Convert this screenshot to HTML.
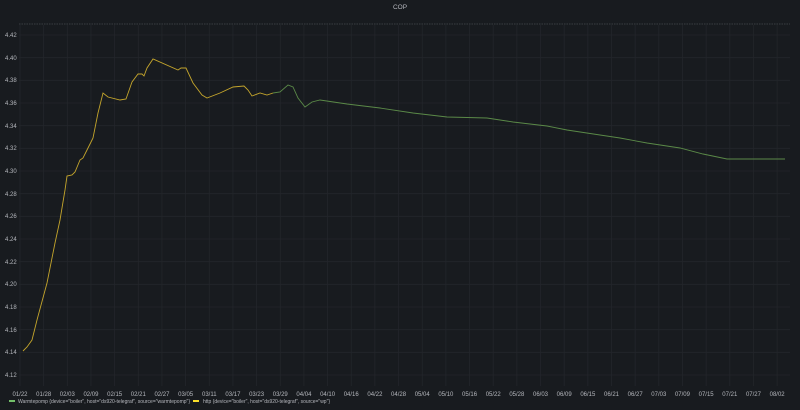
<!DOCTYPE html>
<html><head><meta charset="utf-8"><style>
html,body{margin:0;padding:0;background:#181b1f;}
svg{display:block}
text{font-family:"Liberation Sans",sans-serif;fill:#b5b7bd;}
</style></head><body>
<svg width="800" height="410" viewBox="0 0 800 410" xmlns="http://www.w3.org/2000/svg">
<rect width="800" height="410" fill="#181b1f"/>
<text x="400" y="9" font-size="6.5" text-anchor="middle" fill="#d8d9da">COP</text>
<line x1="19" y1="24" x2="790" y2="24" stroke="#3a3d42" stroke-width="1" stroke-dasharray="1.5,1"/>
<g stroke="#23262b" stroke-width="0.8">
<line x1="19" y1="35" x2="790" y2="35"/><line x1="19" y1="57.7" x2="790" y2="57.7"/>
<line x1="19" y1="80.3" x2="790" y2="80.3"/><line x1="19" y1="103" x2="790" y2="103"/>
<line x1="19" y1="125.7" x2="790" y2="125.7"/><line x1="19" y1="148.3" x2="790" y2="148.3"/>
<line x1="19" y1="171" x2="790" y2="171"/><line x1="19" y1="193.7" x2="790" y2="193.7"/>
<line x1="19" y1="216.3" x2="790" y2="216.3"/><line x1="19" y1="239" x2="790" y2="239"/>
<line x1="19" y1="261.7" x2="790" y2="261.7"/><line x1="19" y1="284.3" x2="790" y2="284.3"/>
<line x1="19" y1="307" x2="790" y2="307"/><line x1="19" y1="329.7" x2="790" y2="329.7"/>
<line x1="19" y1="352.3" x2="790" y2="352.3"/><line x1="19" y1="375" x2="790" y2="375"/>
</g>
<g font-size="6" text-anchor="start">
<text x="5" y="37">4.42</text><text x="5" y="60">4.40</text><text x="5" y="82">4.38</text>
<text x="5" y="105">4.36</text><text x="5" y="128">4.34</text><text x="5" y="150">4.32</text>
<text x="5" y="173">4.30</text><text x="5" y="196">4.28</text><text x="5" y="218">4.26</text>
<text x="5" y="241">4.24</text><text x="5" y="264">4.22</text><text x="5" y="286">4.20</text>
<text x="5" y="309">4.18</text><text x="5" y="332">4.16</text><text x="5" y="354">4.14</text>
<text x="5" y="377">4.12</text>
</g>
<g id="v" stroke="#23262b" stroke-width="0.8"></g>
<g id="xl" font-size="6" text-anchor="middle"></g>
<polyline fill="none" stroke="#5b8a48" stroke-width="0.9" points="273,93 280,92 288,85 293,87 298,98 305,107 312,102 320,100 347,104 380,108 413,113 447,117 487,118 513,122 547,126 567,130 600,135 620,138 647,143 680,148 703,154 727,159 785,159"/>
<polyline fill="none" stroke="#c4a52c" stroke-width="0.9" points="23,351 27,347 32,340 37,320 47,283 55,243 60,220 65,190 67,176 72,175 75,172 80,160 83,158 87,150 92,140 93,138 98,113 103,93 108,97 120,100 126,99 132,82 138,74 142,74 144,76 147,68 153,59 178,70 181,68 186,68 193,83 202,95 207,98 220,93 233,87 244,86 248,90 252,96 260,93 267,95 273,93"/>
<rect x="9" y="400" width="6" height="2" fill="#73bf69"/>
<text x="18" y="403" font-size="5.3" textLength="172" lengthAdjust="spacingAndGlyphs">Warmtepomp {device="boiler", host="ds920-telegraf", source="warmtepomp"}</text>
<rect x="193" y="400" width="6" height="2" fill="#fade2a"/>
<text x="203" y="403" font-size="5.3" textLength="127" lengthAdjust="spacingAndGlyphs">http {device="boiler", host="ds920-telegraf", source="wp"}</text>
<script>
var labels=["01/22","01/28","02/03","02/09","02/15","02/21","02/27","03/05","03/11","03/17","03/23","03/29","04/04","04/10","04/16","04/22","04/28","05/04","05/10","05/16","05/22","05/28","06/03","06/09","06/15","06/21","06/27","07/03","07/09","07/15","07/21","07/27","08/02"];
var v=document.getElementById('v'),xl=document.getElementById('xl'),ns="http://www.w3.org/2000/svg";
labels.forEach(function(l,i){var x=20+i*23.66;
var ln=document.createElementNS(ns,'line');ln.setAttribute('x1',x);ln.setAttribute('x2',x);ln.setAttribute('y1',25);ln.setAttribute('y2',386);v.appendChild(ln);
var t=document.createElementNS(ns,'text');t.setAttribute('x',x);t.setAttribute('y',396);t.textContent=l;xl.appendChild(t);});
</script>
</svg>
</body></html>
